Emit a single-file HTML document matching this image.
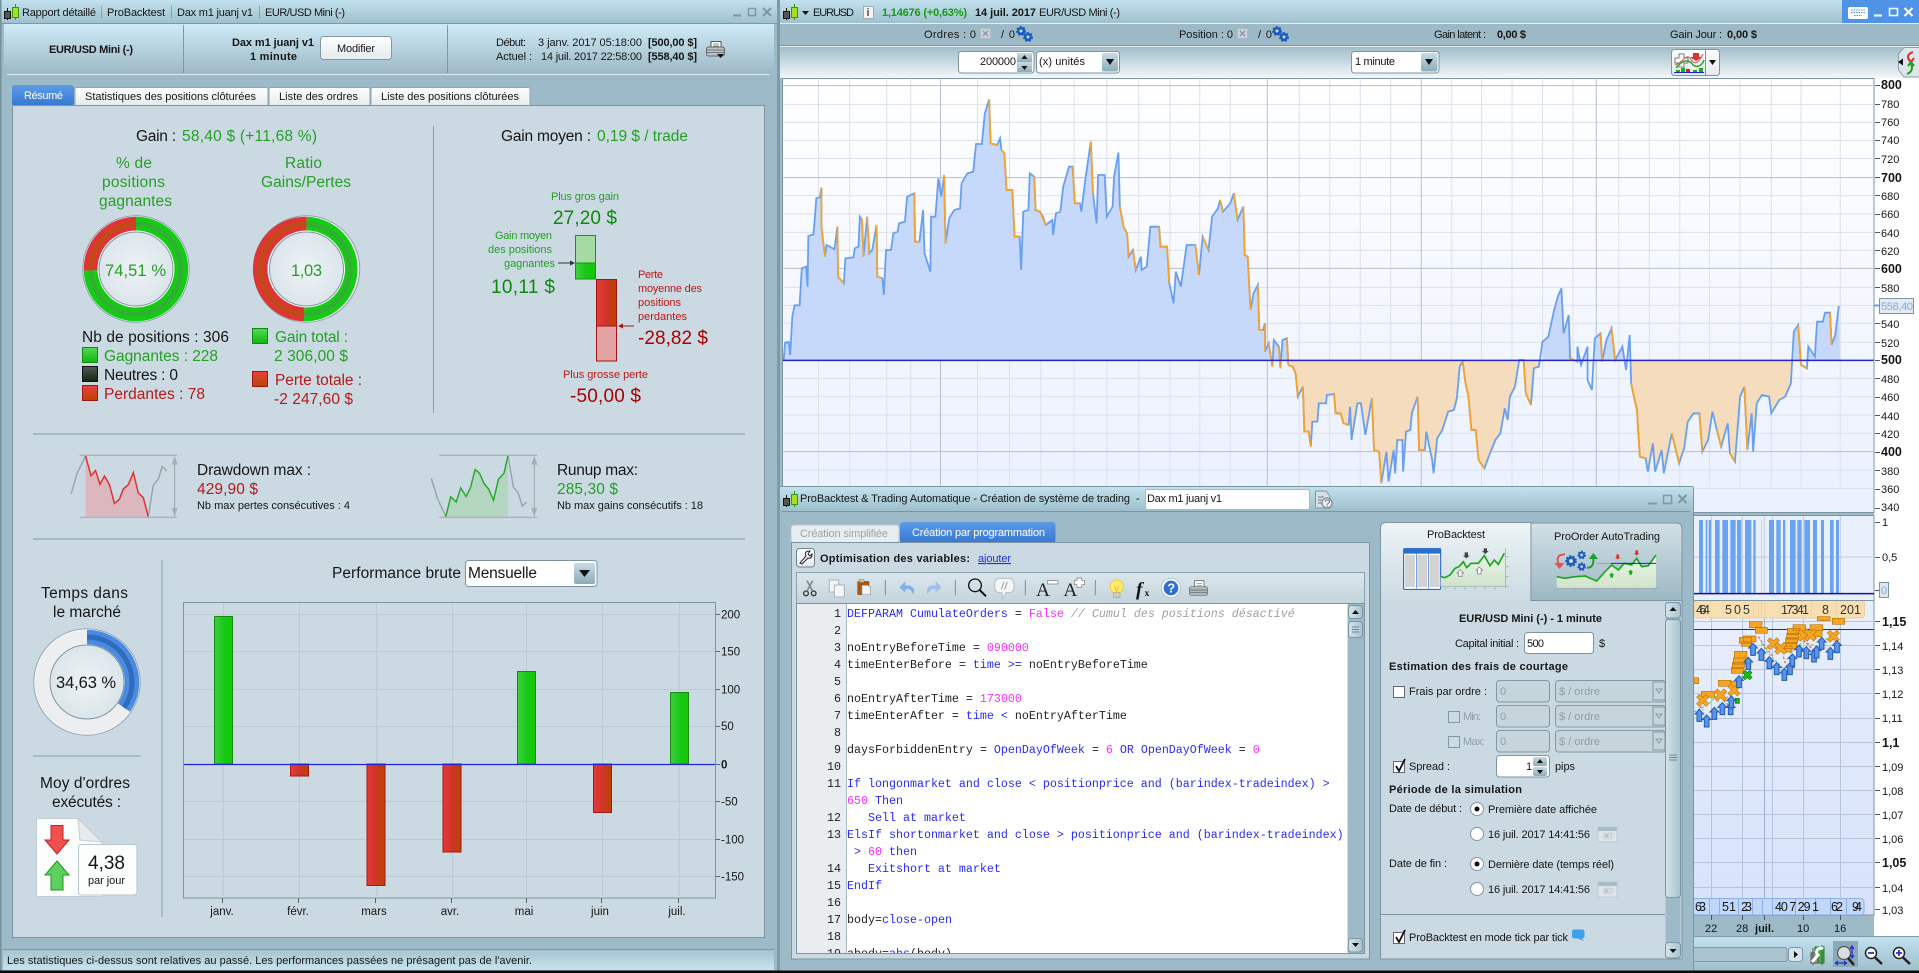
<!DOCTYPE html>
<html><head><meta charset="utf-8"><title>ProBacktest</title>
<style>
html,body{margin:0;padding:0;background:#000;overflow:hidden}
svg{display:block}
text{font-family:"Liberation Sans",sans-serif;fill:#161616;font-size:11px;white-space:pre}
.t11{font-size:11px}.t15{font-size:15.5px}.t16{font-size:16.5px}.t19{font-size:19px}.t13{font-size:12.5px}
.ax text{font-size:11.5px}
.b{font-weight:bold}
.g{fill:#259f25}.gd{fill:#0b8a0b}.r{fill:#b51a1a}.rd{fill:#a80000}.gr{fill:#9a9a9a}
.m{font-family:"Liberation Mono",monospace;font-size:11.67px;fill:#222}
.mb{fill:#2a2aff}.mm{fill:#ff2cff}.mc{fill:#a0a0a0;font-style:italic}
.n{vector-effect:non-scaling-stroke}
.fr{fill:#fff;stroke:#7d95a3;stroke-width:1}
.dis{fill:#c6d5dc;stroke:#8199a6;stroke-width:1}
</style></head><body>
<svg xmlns="http://www.w3.org/2000/svg" width="1919" height="973" viewBox="0 0 1919 973">
<defs>
<linearGradient id="tb" x1="0" y1="0" x2="0" y2="1"><stop offset="0" stop-color="#c0e1ed"/><stop offset="1" stop-color="#a0bfcc"/></linearGradient>
<linearGradient id="hd" x1="0" y1="0" x2="0" y2="1"><stop offset="0" stop-color="#cfebf7"/><stop offset="1" stop-color="#9cb9c6"/></linearGradient>
<linearGradient id="b3" x1="0" y1="0" x2="0" y2="1"><stop offset="0" stop-color="#a2bdca"/><stop offset="1" stop-color="#f3f7f9"/></linearGradient>
<linearGradient id="st" x1="0" y1="0" x2="0" y2="1"><stop offset="0" stop-color="#a5c3d0"/><stop offset="1" stop-color="#c8e4ef"/></linearGradient>
<linearGradient id="bl" x1="0" y1="0" x2="0" y2="1"><stop offset="0" stop-color="#5d9be6"/><stop offset="1" stop-color="#3677d2"/></linearGradient>
<linearGradient id="btn" x1="0" y1="0" x2="0" y2="1"><stop offset="0" stop-color="#c6dce6"/><stop offset="1" stop-color="#8eabb9"/></linearGradient>
<linearGradient id="wb" x1="0" y1="0" x2="0" y2="1"><stop offset="0" stop-color="#ffffff"/><stop offset="1" stop-color="#e4eaed"/></linearGradient>
<linearGradient id="gb" x1="0" y1="0" x2="1" y2="0"><stop offset="0" stop-color="#3fd03f"/><stop offset=".5" stop-color="#18c818"/><stop offset="1" stop-color="#12c800"/></linearGradient>
<linearGradient id="rb" x1="0" y1="0" x2="1" y2="0"><stop offset="0" stop-color="#e63a3a"/><stop offset=".5" stop-color="#cf3428"/><stop offset="1" stop-color="#b84400"/></linearGradient>
<linearGradient id="gv" x1="0" y1="0" x2="0" y2="1"><stop offset="0" stop-color="#52d852"/><stop offset="1" stop-color="#10b810"/></linearGradient>
<linearGradient id="rv" x1="0" y1="0" x2="0" y2="1"><stop offset="0" stop-color="#e84040"/><stop offset="1" stop-color="#b84400"/></linearGradient>
<linearGradient id="kv" x1="0" y1="0" x2="0" y2="1"><stop offset="0" stop-color="#555"/><stop offset="1" stop-color="#0c2a0c"/></linearGradient>
<radialGradient id="disc" cx=".5" cy=".5" r=".6"><stop offset="0" stop-color="#eef3f6"/><stop offset="1" stop-color="#d7e2e8"/></radialGradient>
<linearGradient id="ch1" x1="0" y1="0" x2="0" y2="1"><stop offset="0" stop-color="#ffffff"/><stop offset="1" stop-color="#eaf0fe"/></linearGradient>
<linearGradient id="ch3" x1="0" y1="0" x2="0" y2="1"><stop offset="0" stop-color="#e8effd"/><stop offset="1" stop-color="#d7e2fa"/></linearGradient>
<linearGradient id="pt" x1="0" y1="0" x2="0" y2="1"><stop offset="0" stop-color="#eef4f6"/><stop offset="1" stop-color="#cbdae2"/></linearGradient>
<linearGradient id="pt2" x1="0" y1="0" x2="0" y2="1"><stop offset="0" stop-color="#d2e0e6"/><stop offset="1" stop-color="#9db8c4"/></linearGradient>
<linearGradient id="tbar" x1="0" y1="0" x2="0" y2="1"><stop offset="0" stop-color="#dbe6ec"/><stop offset="1" stop-color="#c4d4dc"/></linearGradient>
<linearGradient id="scr" x1="0" y1="0" x2="1" y2="0"><stop offset="0" stop-color="#d4e3ea"/><stop offset="1" stop-color="#a9c3cf"/></linearGradient>
<linearGradient id="grn" x1="0" y1="0" x2="0" y2="1"><stop offset="0" stop-color="#eef4ea"/><stop offset="1" stop-color="#cfe3cb"/></linearGradient>
<clipPath id="up"><rect x="0" y="0" width="1600" height="1081"/></clipPath>
<clipPath id="dn"><rect x="0" y="1081" width="1600" height="400"/></clipPath>
<clipPath id="ed"><rect x="797" y="604" width="550" height="349"/></clipPath>
<clipPath id="c3"><rect x="1693" y="601" width="181" height="314"/></clipPath>
<g id="logo"><path d="M7.5 8V20" stroke="#111"/><rect x="4.5" y="11.5" width="6" height="7" fill="#555" stroke="#111"/><path d="M15.5 4V20" stroke="#2a9a10"/><rect x="12.5" y="7.5" width="6" height="10" fill="#a6e020" stroke="#2a9a10"/></g>
<g id="prn"><rect x="5" y="0.5" width="10" height="7" fill="#fff" stroke="#555"/><path d="M7 3H13M7 5H13" stroke="#888"/><rect x="0.5" y="6" width="18" height="9" rx="2" fill="#b8c2c8" stroke="#666"/><path d="M1 9H18M1 11.5H18" stroke="#777"/></g>
<g id="gear"><circle cx="0" cy="0" r="4" fill="#1a5cc0" stroke="#1a5cc0" stroke-width="2" stroke-dasharray="2 1.5"/><circle r="1.5" fill="#cfe0ef"/></g>
<g id="cal"><rect x="0" y="2" width="19" height="15" fill="#dde6eb" stroke="#bccad2"/><rect x="0" y="2" width="19" height="4" fill="#a8bdc8"/><path d="M4 9H16M4 12H16M7 7V15M10 7V15M13 7V15" stroke="#c2ced6"/><rect x="7" y="9.500" width="3" height="3" fill="#e8b0b0"/></g>
<g id="ua"><path d="M0 0L13 14H7V36H-7V14H-13Z" fill="#5a94e8" stroke="#1d58b8" stroke-width="3"/></g>
<g id="xc"><path d="M-18 -10L-10 -18L0 -8L10 -18L18 -10L8 0L18 10L10 18L0 8L-10 18L-18 10L-8 0Z" fill="#f5a522" stroke="#c87a08" stroke-width="2"/></g>
</defs>

<rect width="1919" height="973" fill="#9dbac8"/>

<!-- LEFT WINDOW -->
<rect x="0" y="0" width="777" height="24" fill="url(#tb)"/>
<rect x="0" y="0" width="1.500" height="971" fill="#75909d"/>
<rect x="777" y="0" width="3" height="971" fill="#7f9aa7"/>
<path d="M0 23.500H777" stroke="#7f9aa7"/>
<use href="#logo"/>
<text x="22" y="16" textLength="74">Rapport détaillé</text><path d="M101.500 6V18M171.500 6V18M259.500 6V18" stroke="#8aa3af"/>
<text x="107" y="16" textLength="58">ProBacktest</text>
<text x="177" y="16" textLength="76">Dax m1 juanj v1</text>
<text x="265" y="16" textLength="80">EUR/USD Mini (-)</text>
<path d="M733 15.500H741" stroke="#7f98a4" stroke-width="2"/><rect x="748.500" y="8.500" width="7" height="7" fill="none" stroke="#7f98a4" stroke-width="1.500"/><path d="M763 8L771 16M771 8L763 16" stroke="#7f98a4" stroke-width="2"/>

<rect x="4" y="24" width="770" height="50" fill="url(#hd)"/>
<path d="M7 74.500H770" stroke="#e0ecf1"/><path d="M183.500 25V73M447.500 25V73" stroke="#7f98a4"/>
<text class="b" x="49" y="53" textLength="84">EUR/USD Mini (-)</text>
<text class="b" x="232" y="46" textLength="82">Dax m1 juanj v1</text>
<text class="b" x="250" y="60" textLength="47">1 minute</text>
<rect x="320.500" y="36.500" width="71" height="23" rx="3" fill="url(#wb)" stroke="#8199a6"/>
<text x="337" y="52" textLength="38">Modifier</text>
<text x="496" y="46" textLength="30">Début:</text><text x="538" y="46" textLength="104">3 janv. 2017 05:18:00</text><text class="b" x="648" y="46" textLength="49">[500,00 $]</text>
<text x="496" y="60" textLength="36">Actuel :</text><text x="541" y="60" textLength="101">14 juil. 2017 22:58:00</text><text class="b" x="648" y="60" textLength="49">[558,40 $]</text>
<use href="#prn" x="706" y="41"/><path d="M717 54H724L720.500 58Z" fill="#111"/>

<!-- tabs -->
<rect x="12" y="85" width="62" height="21" rx="3" fill="url(#bl)"/>
<text x="24" y="99" textLength="39" style="fill:#fff">Résumé</text>
<rect x="75" y="87.500" width="193" height="19" rx="2" fill="url(#wb)" stroke="#8fa7b3"/>
<rect x="269" y="87.500" width="101" height="19" rx="2" fill="url(#wb)" stroke="#8fa7b3"/>
<rect x="371" y="87.500" width="159" height="19" rx="2" fill="url(#wb)" stroke="#8fa7b3"/>
<text x="85" y="100" textLength="171">Statistiques des positions clôturées</text>
<text x="279" y="100" textLength="79">Liste des ordres</text>
<text x="381" y="100" textLength="138">Liste des positions clôturées</text>
<rect x="12.500" y="105.500" width="752" height="832" fill="#cbdae2" stroke="#7d95a3"/>

<text class="t15" x="136" y="141" textLength="40">Gain :</text><text class="t15 g" x="182" y="141" textLength="135">58,40 $ (+11,68 %)</text>
<path d="M433.500 126V413" stroke="#8aa2ae"/>
<text class="t15" x="501" y="141" textLength="90">Gain moyen :</text><text class="t15 g" x="597" y="141" textLength="91">0,19 $ / trade</text>
<text class="t15 g" x="116" y="168" textLength="36">% de</text>
<text class="t15 g" x="102" y="187" textLength="63">positions</text>
<text class="t15 g" x="99" y="206" textLength="73">gagnantes</text>
<text class="t15 g" x="285" y="168" textLength="37">Ratio</text>
<text class="t15 g" x="261" y="187" textLength="90">Gains/Pertes</text>

<!-- donut 1 -->
<circle cx="136" cy="269" r="53.200" fill="#fff" stroke="#8b9ea8"/>
<path d="M136 224A45 45 0 1 1 91 270.400" fill="none" stroke="#14cc14" stroke-width="14.500"/>
<path d="M136 224A45 45 0 1 1 91 270.400" fill="none" stroke="#30b030" stroke-width="5"/>
<path d="M91 270.400A45 45 0 0 1 136 224" fill="none" stroke="#e03434" stroke-width="14.500"/>
<path d="M91 270.400A45 45 0 0 1 136 224" fill="none" stroke="#c04a18" stroke-width="5"/>
<circle cx="136" cy="269" r="37" fill="url(#disc)" stroke="#7d929d"/><circle cx="136" cy="269" r="38" fill="none" stroke="#fff" stroke-width="1"/>
<text class="t16 g" x="105" y="276" textLength="61">74,51 %</text>
<!-- donut 2 -->
<circle cx="306.500" cy="269" r="53.200" fill="#fff" stroke="#8b9ea8"/>
<path d="M306.500 224A45 45 0 1 1 304.100 314" fill="none" stroke="#14cc14" stroke-width="14.500"/>
<path d="M306.500 224A45 45 0 1 1 304.100 314" fill="none" stroke="#30b030" stroke-width="5"/>
<path d="M304.100 314A45 45 0 0 1 306.500 224" fill="none" stroke="#e03434" stroke-width="14.500"/>
<path d="M304.100 314A45 45 0 0 1 306.500 224" fill="none" stroke="#c04a18" stroke-width="5"/>
<circle cx="306.500" cy="269" r="37" fill="url(#disc)" stroke="#7d929d"/><circle cx="306.500" cy="269" r="38" fill="none" stroke="#fff"/>
<text class="t16 g" x="291" y="276" textLength="31">1,03</text>

<text class="t15" x="82" y="342" textLength="147">Nb de positions : 306</text>
<rect x="82.500" y="347.500" width="15" height="15" fill="url(#gv)" stroke="#118a11"/><text class="t15 g" x="104" y="361" textLength="114">Gagnantes : 228</text>
<rect x="82.500" y="366.500" width="15" height="15" fill="url(#kv)" stroke="#111"/><text class="t15" x="104" y="380" textLength="74">Neutres : 0</text>
<rect x="82.500" y="385.500" width="15" height="15" fill="url(#rv)" stroke="#a51414"/><text class="t15 r" x="104" y="399" textLength="101">Perdantes : 78</text>
<rect x="252.500" y="328.500" width="15" height="15" fill="url(#gv)" stroke="#118a11"/><text class="t15 g" x="275" y="342" textLength="73">Gain total :</text><text class="t15 g" x="274" y="361" textLength="74">2 306,00 $</text>
<rect x="252.500" y="371.500" width="15" height="15" fill="url(#rv)" stroke="#a51414"/><text class="t15 r" x="275" y="385" textLength="87">Perte totale :</text><text class="t15 r" x="274" y="404" textLength="79">-2 247,60 $</text>

<!-- gain box -->
<text class="g" x="551" y="200" textLength="68">Plus gros gain</text>
<text class="t19 gd" x="553" y="224" textLength="64">27,20 $</text>
<text class="g" x="495" y="239" textLength="57">Gain moyen</text>
<text class="g" x="488" y="253" textLength="64">des positions</text>
<text class="g" x="504" y="267" textLength="51">gagnantes</text>
<path d="M558 263H572" stroke="#333"/><path d="M575 263L570 260.500V265.500Z" fill="#333"/>
<text class="t19 gd" x="491" y="293" textLength="64">10,11 $</text>
<rect x="575.500" y="235.500" width="20" height="27.500" fill="#a4dba4" stroke="#1c8f1c"/>
<rect x="575.500" y="263" width="20" height="16" fill="url(#gb)" stroke="#1c8f1c"/>
<rect x="596.500" y="279.500" width="20" height="46.500" fill="url(#rb)" stroke="#a51414"/>
<rect x="596.500" y="326" width="20" height="35" fill="#e4a3a3" stroke="#a51414"/>
<path d="M634 326H622" stroke="#a51414"/><path d="M618 326L623 323.500V328.500Z" fill="#a51414"/>
<text class="r" x="638" y="278" textLength="25">Perte</text>
<text class="r" x="638" y="292" textLength="64">moyenne des</text>
<text class="r" x="638" y="306" textLength="43">positions</text>
<text class="r" x="638" y="320" textLength="49">perdantes</text>
<text class="t19 rd" x="638" y="344" textLength="70">-28,82 $</text>
<text class="r" x="563" y="378" textLength="85">Plus grosse perte</text>
<text class="t19 rd" x="570" y="402" textLength="71">-50,00 $</text>
<path d="M33 434H745M33 539H745" stroke="#7f98a4"/>

<!-- drawdown / runup -->
<g transform="translate(0,430) scale(.4975,.3463)">
<polygon points="172,75 183,132 192,117 201,157 210,133 220,158 230,212 240,200 248,170 258,158 268,123 278,182 288,195 298,250 172,250" fill="#dcb8be"/>
<polyline class="n" points="143,185 155,125 172,75" fill="none" stroke="#9aa6ad" stroke-width="1.500"/>
<polyline class="n" points="298,250 308,160 318,142 326,105 335,118" fill="none" stroke="#9aa6ad" stroke-width="1.500"/>
<polyline class="n" points="172,75 183,132 192,117 201,157 210,133 220,158 230,212 240,200 248,170 258,158 268,123 278,182 288,195 298,250" fill="none" stroke="#e03030" stroke-width="1.500"/>
<path class="n" d="M160 73H356M160 252H356M351 78V248" stroke="#9aa6ad" fill="none"/>
<path d="M351 75L345 100H357ZM351 250L345 225H357Z" fill="#a3afb6"/>
<polygon points="896,250 906,193 917,208 926,167 937,192 946,165 955,114 964,125 973,155 982,170 992,203 1002,142 1013,125 1021,75 1021,250" fill="#b4d6c0"/>
<polyline class="n" points="867,140 880,200 896,250" fill="none" stroke="#9aa6ad" stroke-width="1.500"/>
<polyline class="n" points="1021,75 1032,165 1041,180 1050,220 1058,208" fill="none" stroke="#9aa6ad" stroke-width="1.500"/>
<polyline class="n" points="896,250 906,193 917,208 926,167 937,192 946,165 955,114 964,125 973,155 982,170 992,203 1002,142 1013,125 1021,75" fill="none" stroke="#2aaa30" stroke-width="1.500"/>
<path class="n" d="M883 73H1080M883 252H1080M1074 78V248" stroke="#9aa6ad" fill="none"/>
<path d="M1074 75L1068 100H1080ZM1074 250L1068 225H1080Z" fill="#a3afb6"/>
</g>
<text class="t15" x="197" y="475" textLength="114">Drawdown max :</text>
<text class="t15 r" x="197" y="494" textLength="61">429,90 $</text>
<text class="t11" x="197" y="509" textLength="153">Nb max pertes consécutives : 4</text>
<text class="t15" x="557" y="475" textLength="81">Runup max:</text>
<text class="t15 g" x="557" y="494" textLength="61">285,30 $</text>
<text class="t11" x="557" y="509" textLength="146">Nb max gains consécutifs : 18</text>

<path d="M162 560V917M33 756H141" stroke="#8aa2ae"/>
<text class="t15" x="41" y="598" textLength="87">Temps dans</text>
<text class="t15" x="53" y="617" textLength="68">le marché</text>
<!-- donut 3 -->
<circle cx="87" cy="682" r="53.200" fill="#fff" stroke="#93a5ae"/>
<circle cx="87" cy="682" r="45" fill="none" stroke="#eceef0" stroke-width="14"/>
<path d="M87 637A45 45 0 0 1 124 707.600" fill="none" stroke="#4a8ae0" stroke-width="14.500"/>
<path d="M87 637A45 45 0 0 1 124 707.600" fill="none" stroke="#2f6cbe" stroke-width="5"/>
<circle cx="87" cy="682" r="37" fill="url(#disc)" stroke="#7d929d"/>
<text class="t16" x="56" y="688" textLength="60">34,63 %</text>
<text class="t15" x="40" y="788" textLength="90">Moy d'ordres</text>
<text class="t15" x="52" y="807" textLength="69">exécutés :</text>
<!-- order doc -->
<path d="M36.500 818.500H78L102 842V896.500H36.500Z" fill="#fbfcfc" stroke="#c2ced6"/>
<path d="M78 818.500L80 840L102 842Z" fill="#e6ebee" stroke="#c2ced6"/>
<path d="M51 825.500H63V840H69L57 854L45 840H51Z" fill="#ef5050" stroke="#c02020"/>
<path d="M57 861L69 875H63V890H51V875H45Z" fill="#5ed05e" stroke="#1e981e"/>
<rect x="78.500" y="844.500" width="58.500" height="50.500" rx="3" fill="#fbfcfc" stroke="#b9c6ce"/>
<text class="t19" x="88" y="869" textLength="37" style="-webkit-text-stroke:.3px #111">4,38</text>
<text class="t11" x="88" y="884" textLength="37">par jour</text>

<text class="t15" x="332" y="578" textLength="129">Performance brute</text>
<rect x="465.500" y="560.500" width="131.500" height="26" rx="3" class="fr"/>
<text class="t15" x="468" y="578" textLength="69">Mensuelle</text>
<rect x="574" y="563" width="21" height="21" rx="2" fill="url(#btn)"/><path d="M579 570H590L584.500 577Z" fill="#111"/>

<!-- bar chart -->
<rect x="183.500" y="602.500" width="532" height="295.500" fill="#cbdae2" stroke="#7d95a3"/>
<path d="M184 614.500H715M184 651.500H715M184 689.500H715M184 726.500H715M184 801.500H715M184 839.500H715M184 876.500H715M223.500 603V898M299.500 603V898M376.500 603V898M452.500 603V898M526.500 603V898M602.500 603V898M679.500 603V898" stroke="#bccad2"/>
<path d="M716 614.500H720M716 651.500H720M716 689.500H720M716 726.500H720M716 764.500H720M716 801.500H720M716 839.500H720M716 876.500H720M222.500 898V903M298.500 898V903M375.500 898V903M451.500 898V903M526.500 898V903M601.500 898V903M678.500 898V903" stroke="#566"/>
<g stroke="#138a13"><rect x="214.500" y="616.500" width="18" height="147.500" fill="url(#gb)"/><rect x="517.500" y="671.500" width="18" height="92.500" fill="url(#gb)"/><rect x="670.500" y="692.500" width="18" height="71.500" fill="url(#gb)"/></g>
<g stroke="#a81616"><rect x="290.500" y="764" width="18" height="12" fill="url(#rb)"/><rect x="367" y="764" width="18" height="121.500" fill="url(#rb)"/><rect x="443" y="764" width="18" height="88" fill="url(#rb)"/><rect x="593.500" y="764" width="18" height="48.500" fill="url(#rb)"/></g>
<path d="M184 764.500H715" stroke="#2323d8" stroke-width="1.200"/>
<g class="ax"><text x="721" y="618.500">200</text><text x="721" y="655.500">150</text><text x="721" y="693.500">100</text><text x="721" y="730">50</text><text class="b" x="721" y="768.500">0</text><text x="721" y="805.500">-50</text><text x="721" y="843.500">-100</text><text x="721" y="880.500">-150</text></g>
<g class="ax" text-anchor="middle"><text x="222" y="915">janv.</text><text x="298" y="915">févr.</text><text x="374" y="915">mars</text><text x="450" y="915">avr.</text><text x="524" y="915">mai</text><text x="600" y="915">juin</text><text x="677" y="915">juil.</text></g>

<!-- status -->
<path d="M3 949.500H774" stroke="#7f98a4"/>
<rect x="3" y="950" width="771" height="20" fill="url(#st)"/>
<text x="7" y="964" textLength="525">Les statistiques ci-dessus sont relatives au passé. Les performances passées ne présagent pas de l'avenir.</text>

<!-- RIGHT WINDOW -->
<rect x="780" y="0" width="1139" height="24" fill="url(#tb)"/>
<path d="M780 23.500H1919" stroke="#e4eef2"/>
<rect x="1842" y="0" width="77" height="23" fill="#4f93e6"/>
<rect x="1848" y="7" width="20" height="12" rx="2" fill="#fff"/><path d="M1851 10H1865M1851 12.500H1865M1854 15.500H1862" stroke="#4f93e6" stroke-dasharray="1.500 1"/>
<path d="M1874 15.500H1882" stroke="#fff" stroke-width="2"/><rect x="1889.500" y="8.500" width="8" height="7" fill="none" stroke="#fff" stroke-width="1.500"/><path d="M1904.500 8L1912.500 16M1912.500 8L1904.500 16" stroke="#fff" stroke-width="2"/>
<use href="#logo" x="779"/>
<path d="M802 11H809L805.500 15Z" fill="#111"/>
<text x="813" y="16" textLength="41">EURUSD</text>
<rect x="863.500" y="6.500" width="10" height="12" fill="#f2f4f5" stroke="#a0adb4"/><text class="b t11" x="866.500" y="16" style="fill:#555">i</text>
<text class="b" x="882" y="16" textLength="85" style="fill:#159a15">1,14676 (+0,63%)</text>
<text class="b" x="975" y="16" textLength="61">14 juil. 2017</text>
<text x="1039" y="16" textLength="81">EUR/USD Mini (-)</text>

<rect x="780" y="24" width="1139" height="21" fill="#9db9c6"/>
<path d="M780 45.500H1919" stroke="#7f98a4"/><path d="M780 46.500H1919" stroke="#e4eef2"/>
<text x="924" y="38" textLength="52">Ordres : 0</text><rect x="980.500" y="28.500" width="10" height="10" fill="#c4d2d9" stroke="#aebcc4"/><path d="M983 31L988 36M988 31L983 36" stroke="#889"/><text x="1001" y="38" textLength="14">/ 0</text>
<use href="#gear" x="1021" y="31"/><use href="#gear" x="1028" y="37"/>
<text x="1179" y="38" textLength="54">Position : 0</text><rect x="1237.500" y="28.500" width="10" height="10" fill="#c4d2d9" stroke="#aebcc4"/><path d="M1240 31L1245 36M1245 31L1240 36" stroke="#889"/><text x="1258" y="38" textLength="14">/ 0</text>
<use href="#gear" x="1277" y="31"/><use href="#gear" x="1284" y="37"/>
<text x="1434" y="38" textLength="52">Gain latent :</text><text class="b" x="1497" y="38" textLength="29">0,00 $</text>
<text x="1670" y="38" textLength="52">Gain Jour :</text><text class="b" x="1727" y="38" textLength="30">0,00 $</text>

<rect x="780" y="47" width="1139" height="31" fill="url(#b3)"/>
<rect x="958.500" y="51.500" width="75.500" height="21.500" rx="3" class="fr"/>
<text x="980" y="65" textLength="36">200000</text>
<rect x="1017" y="53" width="15" height="9" fill="url(#btn)"/><rect x="1017" y="62" width="15" height="10" fill="url(#btn)"/><path d="M1024.500 55L1027.500 59H1021.500ZM1024.500 70L1027.500 66H1021.500Z" fill="#111"/>
<rect x="1036.500" y="51.500" width="83" height="21.500" rx="3" class="fr"/>
<text x="1039" y="65" textLength="46">(x) unités</text>
<rect x="1102" y="53" width="16" height="18.500" rx="2" fill="url(#btn)"/><path d="M1106 59H1114L1110 65Z" fill="#111"/>
<rect x="1351.500" y="51.500" width="87.500" height="21.500" rx="3" class="fr"/>
<text x="1355" y="65" textLength="40">1 minute</text>
<rect x="1421" y="53" width="16.500" height="18.500" rx="2" fill="url(#btn)"/><path d="M1425 59H1433L1429 65Z" fill="#111"/>
<rect x="1671.500" y="49.500" width="48" height="26" rx="3" fill="url(#wb)" stroke="#7d95a3"/><path d="M1705.500 50V75" stroke="#7d95a3"/>
<path d="M1675 58H1679V54H1684V58H1688V63H1684V67H1679V63H1675Z" fill="#fff" stroke="#777"/>
<path d="M1675 65C1684 62 1685 54 1690 58C1693 64 1697 66 1703 54" fill="none" stroke="#d86a6a" stroke-width="1.200"/>
<path d="M1676 68C1684 58 1690 60 1693 65C1697 68 1702 66 1704 60" fill="none" stroke="#2aa52a" stroke-width="1.500"/>
<path d="M1693 53H1699V57H1702L1696 61L1690 57H1693Z" fill="#e03030"/>
<path d="M1676 70H1680V72H1676ZM1681 68H1685V72H1681ZM1693 70H1697V72H1693ZM1699 68H1703V72H1699Z" fill="#18b018"/><path d="M1686 69H1690V72H1686Z" fill="#d82020"/><path d="M1674 72.500H1704" stroke="#1e1ed0"/>
<path d="M1709 60H1716L1712.500 65Z" fill="#111"/>
<path d="M1919 47.500H1904L1898.500 54V70L1904 77H1919" fill="#dce7ec" stroke="#8aa2ae"/>
<path d="M1898 62L1903 58.500V65.500Z" fill="#111"/>
<path d="M1913 52C1907 54 1907 58 1910 61M1908 58L1911 62L1914 58" fill="none" stroke="#e03030" stroke-width="2"/>
<path d="M1911 64C1913 68 1912 72 1907 74M1908 66L1911 62L1914 66" fill="none" stroke="#1ea01e" stroke-width="2"/>

<!-- main chart -->
<rect x="1874" y="78" width="45" height="859" fill="#fff"/>
<rect x="782.500" y="78.500" width="1091.500" height="434" fill="url(#ch1)" stroke="#7d95a3"/>
<g transform="translate(780,0) scale(.72622,.33333)">
<path class="n" fill="none" stroke="#dce1ea" d="M53 236V1460M96 236V1460M147 236V1460M180 236V1460M272 236V1460M316 236V1460M359 236V1460M405 236V1460M450 236V1460M494 236V1460M537 236V1460M578 236V1460M620 236V1460M715 236V1460M757 236V1460M799 236V1460M841 236V1460M925 236V1460M966 236V1460M1008 236V1460M1050 236V1460M1092 236V1460M1155 236V1460M1197 236V1460M1239 236V1460M1280 236V1460M1322 236V1460M1365 236V1460M1406 236V1460M1460 236V1460M4 313H1506M4 367H1506M4 421H1506M4 475H1506M4 587H1506M4 642H1506M4 697H1506M4 751H1506M4 862H1506M4 916H1506M4 970H1506M4 1027H1506M4 1135H1506M4 1190H1506M4 1245H1506M4 1300H1506M4 1410H1506M4 1465H1506"/>
<path class="n" fill="none" stroke="#b8c0ce" d="M221 236V1460M671 236V1460M883 236V1460M1124 236V1460M4 257H1506M4 533H1506M4 805H1506M4 1355H1506"/>
<polygon clip-path="url(#up)" fill="#c6d9fb" points="5,1081 7,1028 12,1026 14,1065 17,950 20,916 27,916 30,805 36,800 38,860 39,708 46,703 47,680 50,595 55,592 57,563 57,680 62,770 64,735 75,748 79,680 80,830 88,850 90,775 101,772 103,745 108,740 110,650 113,660 115,770 120,650 123,760 127,750 133,675 134,830 141,835 143,885 146,750 153,750 156,700 162,695 164,670 172,665 175,590 185,580 186,725 192,725 197,630 199,760 207,815 208,650 214,650 218,535 222,590 226,525 228,730 233,655 240,630 248,625 250,550 258,520 266,515 270,432 278,432 282,340 288,298 290,430 299,435 303,415 305,450 309,460 312,570 320,570 323,710 330,710 332,810 335,635 342,630 344,520 350,530 352,630 358,635 362,650 366,675 375,660 376,705 380,640 386,635 390,560 398,500 403,500 406,610 413,610 415,635 420,545 428,425 431,580 436,670 438,525 447,525 450,650 458,620 460,530 466,458 468,620 473,680 478,700 480,770 486,750 490,810 497,770 498,810 505,800 510,680 522,680 524,740 533,740 536,850 542,910 545,815 552,860 560,735 572,735 577,825 582,710 590,750 595,650 603,625 606,600 610,635 620,610 625,580 630,660 638,620 640,765 644,770 648,930 652,880 658,855 660,990 665,990 668,970 668,1055 673,1030 678,1100 680,1020 687,1040 689,1105 692,1020 698,1015 700,1081 1050,1081 1050,1025 1058,1010 1062,970 1066,930 1071,890 1076,865 1079,1000 1086,945 1088,1075 1098,1081 1098,1040 1103,1081 1112,1040 1112,1081 1122,1081 1122,1015 1130,1000 1132,1081 1138,1020 1145,985 1150,1080 1160,1040 1165,1081 1170,1005 1172,1081 1396,1081 1396,995 1402,975 1406,1081 1416,1081 1416,1040 1425,1070 1428,965 1436,965 1439,938 1446,938 1448,1035 1453,1005 1458,918 1460,1081"/>
<polygon clip-path="url(#dn)" fill="#f5dcbc" points="700,1081 706,1100 710,1120 713,1190 720,1160 722,1295 728,1295 731,1340 733,1265 740,1265 742,1210 752,1210 753,1185 763,1182 765,1240 772,1240 776,1270 783,1275 785,1220 787,1320 795,1210 800,1210 806,1305 815,1195 818,1350 825,1355 828,1450 835,1355 838,1445 845,1350 847,1420 850,1320 857,1320 858,1415 862,1295 868,1290 870,1240 878,1190 880,1350 888,1350 890,1295 898,1380 900,1420 905,1315 912,1290 920,1235 928,1230 932,1195 936,1100 940,1085 944,1150 948,1190 952,1290 958,1290 962,1380 970,1405 975,1375 985,1320 992,1300 998,1225 1002,1260 1005,1190 1012,1160 1018,1081 1024,1081 1027,1180 1034,1215 1038,1105 1045,1100 1047,1081 1172,1081 1172,1150 1180,1230 1184,1370 1192,1375 1195,1415 1202,1330 1205,1415 1214,1350 1217,1420 1228,1300 1238,1390 1245,1345 1250,1265 1258,1240 1266,1240 1270,1355 1278,1320 1284,1235 1290,1290 1296,1340 1305,1270 1308,1360 1315,1385 1322,1190 1328,1160 1332,1350 1338,1240 1340,1355 1345,1210 1352,1185 1362,1190 1365,1240 1376,1200 1384,1190 1392,1150 1394,1081"/>
<polyline class="n" fill="none" stroke="#6a9ff0" stroke-width="1.800" points="5,1081 7,1028 12,1026 14,1065 17,950 20,916 27,916 30,805 36,800 38,860 39,708 46,703 47,680 50,595 55,592 57,563 57,680 62,770 64,735 75,748 79,680 80,830 88,850 90,775 101,772 103,745 108,740 110,650 113,660 115,770 120,650 123,760 127,750 133,675 134,830 141,835 143,885 146,750 153,750 156,700 162,695 164,670 172,665 175,590 185,580 186,725 192,725 197,630 199,760 207,815 208,650 214,650 218,535 222,590 226,525 228,730 233,655 240,630 248,625 250,550 258,520 266,515 270,432 278,432 282,340 288,298 290,430 299,435 303,415 305,450 309,460 312,570 320,570 323,710 330,710 332,810 335,635 342,630 344,520 350,530 352,630 358,635 362,650 366,675 375,660 376,705 380,640 386,635 390,560 398,500 403,500 406,610 413,610 415,635 420,545 428,425 431,580 436,670 438,525 447,525 450,650 458,620 460,530 466,458 468,620 473,680 478,700 480,770 486,750 490,810 497,770 498,810 505,800 510,680 522,680 524,740 533,740 536,850 542,910 545,815 552,860 560,735 572,735 577,825 582,710 590,750 595,650 603,625 606,600 610,635 620,610 625,580 630,660 638,620 640,765 644,770 648,930 652,880 658,855 660,990 665,990 668,970 668,1055 673,1030 678,1100 680,1020 687,1040 689,1105 692,1020 698,1015 700,1095 706,1100 710,1120 713,1190 720,1160 722,1295 728,1295 731,1340 733,1265 740,1265 742,1210 752,1210 753,1185 763,1182 765,1240 772,1240 776,1270 783,1275 785,1220 787,1320 795,1210 800,1210 806,1305 815,1195 818,1350 825,1355 828,1450 835,1355 838,1445 845,1350 847,1420 850,1320 857,1320 858,1415 862,1295 868,1290 870,1240 878,1190 880,1350 888,1350 890,1295 898,1380 900,1420 905,1315 912,1290 920,1235 928,1230 932,1195 936,1100 940,1085 944,1150 948,1190 952,1290 958,1290 962,1380 970,1405 975,1375 985,1320 992,1300 998,1225 1002,1260 1005,1190 1012,1160 1018,1080 1024,1080 1027,1180 1034,1215 1038,1105 1045,1100 1050,1025 1058,1010 1062,970 1066,930 1071,890 1076,865 1079,1000 1086,945 1088,1075 1098,1085 1098,1040 1103,1095 1112,1040 1112,1140 1118,1170 1122,1015 1130,1000 1132,1085 1138,1020 1145,985 1150,1080 1160,1040 1165,1110 1170,1005 1172,1150 1180,1230 1184,1370 1192,1375 1195,1415 1202,1330 1205,1415 1214,1350 1217,1420 1228,1300 1238,1390 1245,1345 1250,1265 1258,1240 1266,1240 1270,1355 1278,1320 1284,1235 1290,1290 1296,1340 1305,1270 1308,1360 1315,1385 1322,1190 1328,1160 1332,1350 1338,1240 1340,1355 1345,1210 1352,1185 1362,1190 1365,1240 1376,1200 1384,1190 1392,1150 1396,995 1402,975 1406,1095 1414,1105 1416,1040 1425,1070 1428,965 1436,965 1439,938 1446,938 1448,1035 1453,1005 1458,918"/>
<path class="n" fill="none" stroke="#f5a32c" stroke-width="1.800" d="M57 563V680L62 770M79 680L80 830L88 850M113 660L115 770M120 650L123 760M133 675L134 830L141 835M185 580L186 725L192 725M226 525L228 730M288 298L290 430L299 435M305 450L309 460L312 570L320 570L323 710L330 710M350 530L352 630L358 635L366 675M403 500L406 610L413 610M428 425L431 580M468 620L473 680L478 700L480 770M490 810L486 750M522 680L524 740L533 740L536 850M572 735L577 825M590 750L582 710M610 635L606 600M625 580L630 660M638 620L640 765L644 770L648 930M658 855L660 990L665 990M668 970V1055M673 1030L678 1100M687 1040L689 1105M698 1015L700 1095L706 1100L710 1120L713 1190M720 1160L722 1295L728 1295L731 1340M763 1182L765 1240L772 1240L776 1270L783 1275M815 1195L818 1350L825 1355L828 1450M878 1190L880 1350L888 1350M940 1085L944 1150L948 1190L952 1290L958 1290L962 1380L970 1405M1024 1080L1027 1180L1034 1215M1088 1075L1098 1085M1130 1000L1132 1085M1145 985L1150 1080M1172 1150L1180 1230L1184 1370L1192 1375M1228 1300L1238 1390M1266 1240L1270 1355M1290 1290L1296 1340M1308 1360L1315 1385M1328 1160L1332 1350M1402 975L1406 1095L1414 1105M1446 938L1448 1035"/>
<path class="n" d="M4 1081H1506" stroke="#2323d8" stroke-width="1.500"/>
</g>
<path d="M1875 85.500H1880M1875 104.500H1880M1875 122.500H1880M1875 140.500H1880M1875 158.500H1880M1875 177.500H1880M1875 195.500H1880M1875 214.500H1880M1875 232.500H1880M1875 250.500H1880M1875 268.500H1880M1875 287.500H1880M1875 323.500H1880M1875 342.500H1880M1875 360.500H1880M1875 378.500H1880M1875 397.500H1880M1875 415.500H1880M1875 433.500H1880M1875 452.500H1880M1875 470.500H1880M1875 489.500H1880M1875 508.500H1880" stroke="#555"/>
<g><text class="b t13" x="1881" y="89">800</text><text x="1881" y="108">780</text><text x="1881" y="126">760</text><text x="1881" y="144">740</text><text x="1881" y="163">720</text><text class="b t13" x="1881" y="182">700</text><text x="1881" y="200">680</text><text x="1881" y="218">660</text><text x="1881" y="237">640</text><text x="1881" y="255">620</text><text class="b t13" x="1881" y="273">600</text><text x="1881" y="292">580</text><text x="1881" y="328">540</text><text x="1881" y="347">520</text><text class="b t13" x="1881" y="364">500</text><text x="1881" y="383">480</text><text x="1881" y="401">460</text><text x="1881" y="420">440</text><text x="1881" y="438">420</text><text class="b t13" x="1881" y="456">400</text><text x="1881" y="475">380</text><text x="1881" y="493">360</text><text x="1881" y="511">340</text></g>
<rect x="1879.500" y="298.500" width="34" height="15" fill="#e3ebf0" stroke="#7d95a3"/><text x="1881" y="310" textLength="32" style="fill:#7fa8ee">558,40</text>
<path d="M1874 305.500H1879" stroke="#6a9ff0" stroke-width="2"/>

<!-- sub chart -->
<rect x="1693" y="515.500" width="181" height="85" fill="#eaf0fb" stroke="#7d95a3"/>
<g transform="translate(1690,510) scale(.33333)">
<path class="n" stroke="#c2cde0" fill="none" d="M64 18V250M157 18V250M223 18V250M248 18V250M340 18V250M451 18V250M12 141H552"/>
<path fill="#6ba3f3" d="M27 30H39V250H27ZM47 30H52V250H47ZM56 30H63V250H56ZM75 30H89V250H75ZM97 30H114V250H97ZM121 30H137V250H121ZM141 30H154V250H141ZM165 30H184V250H165ZM190 30H197V250H190ZM215 30H216V250H215ZM237 30H252V250H237ZM259 30H272V250H259ZM279 30H286V250H279ZM300 30H317V250H300ZM322 30H335V250H322ZM343 30H360V250H343ZM369 30H381V250H369ZM393 30H402V250H393ZM420 30H431V250H420ZM438 30H447V250H438Z"/>
<path class="n" d="M12 251H552" stroke="#12129c" stroke-width="1.500"/>
</g>
<rect x="1879.500" y="582.500" width="9" height="15" fill="#dfe6ea" stroke="#7d95a3"/><text x="1881" y="594" style="fill:#7fa8ee">0</text>
<path d="M1875 522.500H1880M1875 557.500H1880M1875 590.500H1879" stroke="#555"/>
<text x="1882" y="526">1</text><text x="1882" y="561">0,5</text>

<!-- price chart -->
<rect x="1693" y="600.500" width="181" height="314.500" fill="url(#ch3)" stroke="#7d95a3"/>
<g clip-path="url(#c3)">
<path stroke="#b7c5dc" fill="none" d="M1694 621.500H1874M1694 645.500H1874M1694 669.500H1874M1694 693.500H1874M1694 718.500H1874M1694 742.500H1874M1694 766.500H1874M1694 790.500H1874M1694 814.500H1874M1694 838.500H1874M1694 862.500H1874M1694 887.500H1874M1711.500 601V915M1742.500 601V915M1772.500 601V915M1803.500 601V915M1840.500 601V915"/>
<path stroke="#9fb0ca" d="M1764.500 601V915"/>
<path stroke="#12309c" d="M1693 629.500H1874"/>
<g transform="translate(1690,510) scale(.33333)">
<rect x="12" y="272" width="512" height="52" rx="10" fill="#f8dfb2" stroke="#edc788" stroke-width="2"/>
<path d="M60 272V324M100 272V324M190 272V324M205 272V324M215 272V324M225 272V324M270 272V324M365 272V324M440 272V324" stroke="#efcf98" stroke-width="2"/>
<path d="M12 605C40 590 60 585 75 560L95 590L125 540L160 495M215 400L235 430L250 445L285 480M300 430L340 395L380 410L450 355" fill="none" stroke="#50c850" stroke-width="3" stroke-dasharray="7 6"/>
<path d="M20 580L40 600M100 570L118 590M205 380L225 410L250 440M280 440L290 470M340 390L370 420" fill="none" stroke="#e07070" stroke-width="4" stroke-dasharray="8 5"/>
<path d="M12 503H26V521H12ZM34 544H74V562H34ZM85 511H123V529H85ZM122 514H142V532H122ZM133 424H171V444H133ZM130 444H166V462H130ZM127 457H163V475H127ZM124 472H160V490H124ZM148 382H184V400H148ZM160 378H198V396H160ZM155 395H185V409H155ZM178 335H216V353H178ZM196 352H232V370H196ZM292 355H328V373H292ZM290 370H326V387H290ZM287 384H323V400H287ZM284 398H320V416H284ZM280 408H306V426H280ZM309 344H347V362H309ZM360 344H398V362H360ZM370 362H396V380H370ZM382 320H420V332H382ZM427 325H464V343H427Z" fill="#f5a522" stroke="#b87508" stroke-width="2"/>
<rect x="136" y="565" width="12" height="15" fill="#18b018" stroke="#0a800a" stroke-width="2"/>
<path d="M158 488l7-7 7 7 7-7 7 7-7 7 7 7-7 7-7-7-7 7-7-7 7-7z" fill="#20b820" stroke="#0a800a" stroke-width="2"/>
<use href="#xc" x="38" y="571"/><use href="#xc" x="92" y="555"/><use href="#xc" x="132" y="540"/><use href="#xc" x="250" y="401"/><use href="#xc" x="272" y="415"/><use href="#xc" x="341" y="376"/><use href="#xc" x="361" y="375"/><use href="#xc" x="430" y="379"/>
<use href="#ua" x="28" y="598"/><use href="#ua" x="50" y="615"/><use href="#ua" x="73" y="592"/><use href="#ua" x="97" y="578"/><use href="#ua" x="122" y="578"/><use href="#ua" x="124" y="558"/><use href="#ua" x="147" y="497"/><use href="#ua" x="175" y="442"/><use href="#ua" x="189" y="400"/><use href="#ua" x="214" y="415"/><use href="#ua" x="238" y="440"/><use href="#ua" x="260" y="458"/><use href="#ua" x="283" y="475"/><use href="#ua" x="300" y="458"/><use href="#ua" x="307" y="432"/><use href="#ua" x="327" y="405"/><use href="#ua" x="349" y="410"/><use href="#ua" x="372" y="420"/><use href="#ua" x="380" y="408"/><use href="#ua" x="395" y="382"/><use href="#ua" x="421" y="412"/><use href="#ua" x="441" y="392"/>
</g>
<text class="t13" x="1696" y="614" textLength="14" style="fill:#333">464</text>
<text class="t13" x="1725" y="614" textLength="25" style="fill:#333">5 0 5</text>
<text class="t13" x="1781" y="614" textLength="28" style="fill:#333">17341</text>
<text class="t13" x="1822" y="614" style="fill:#333">8</text>
<text class="t13" x="1840" y="614" textLength="21" style="fill:#333">2 0 1</text>
<rect x="1693" y="898.500" width="171" height="16.500" rx="3" fill="#c2d8fa" stroke="#8bb0ec"/>
<path d="M1709.500 899V915M1719.500 899V915M1738.500 899V915M1752.500 899V915M1762.500 899V915M1772.500 899V915M1795.500 899V915M1815.500 899V915M1830.500 899V915M1846.500 899V915" stroke="#8bb0ec"/>
<text class="t13" x="1695" y="911" textLength="11">63</text><text class="t13" x="1722" y="911" textLength="14">51</text><text class="t13" x="1741" y="911" textLength="11">23</text><text class="t13" x="1775" y="911" textLength="44">40 7 29 1</text><text class="t13" x="1831" y="911" textLength="12">62</text><text class="t13" x="1852" y="911" textLength="10">94</text>
</g>
<path d="M1875 621.500H1880M1875 645.500H1880M1875 669.500H1880M1875 693.500H1880M1875 718.500H1880M1875 742.500H1880M1875 766.500H1880M1875 790.500H1880M1875 814.500H1880M1875 838.500H1880M1875 862.500H1880M1875 887.500H1880M1875 909.500H1880" stroke="#555"/>
<text class="b t13" x="1882" y="626">1,15</text><text x="1882" y="650">1,14</text><text x="1882" y="674">1,13</text><text x="1882" y="698">1,12</text><text x="1882" y="722">1,11</text><text class="b t13" x="1882" y="747">1,1</text><text x="1882" y="771">1,09</text><text x="1882" y="795">1,08</text><text x="1882" y="819">1,07</text><text x="1882" y="843">1,06</text><text class="b t13" x="1882" y="867">1,05</text><text x="1882" y="892">1,04</text><text x="1882" y="914">1,03</text>
<path d="M1711.500 915V920M1742.500 915V920M1764.500 915V920M1803.500 915V920M1840.500 915V920" stroke="#555"/>
<text x="1705" y="932">22</text><text x="1736" y="932">28</text><text class="b" x="1755" y="932" textLength="19">juil.</text><text x="1797" y="932">10</text><text x="1834" y="932">16</text>

<!-- bottom toolbar -->
<rect x="1693" y="937" width="226" height="34" fill="url(#tb)"/>
<path d="M1693 936.500H1919" stroke="#7f98a4"/>
<rect x="1693" y="947.500" width="94" height="14" rx="2" fill="#a9c3cf" stroke="#8199a6"/>
<rect x="1788.500" y="947.500" width="14" height="14" rx="3" fill="#d6e4ea" stroke="#8199a6"/><path d="M1794 951L1798 954.500L1794 958Z" fill="#111"/>
<rect x="1815" y="947" width="9" height="16" fill="#3ab43a" stroke="#1a801a"/><rect x="1811" y="953" width="7" height="10" fill="#9a8a8a" stroke="#555"/>
<path d="M1822 945V965M1813 948V965" stroke="#555"/>
<path d="M1812 962L1819 954M1817 954A4 4 0 0 1 1823 949" stroke="#fff" stroke-width="3" fill="none"/>
<rect x="1833" y="941" width="25" height="26" fill="#8da8b6"/>
<circle cx="1844" cy="953" r="6.500" fill="#d8dde0" stroke="#555" stroke-width="1.200"/><path d="M1848 958L1854 965" stroke="#222" stroke-width="2.500"/>
<path d="M1852 947V957M1850 949L1852 946L1854 949M1850 955L1852 958L1854 955M1836 963H1846M1838 961L1835.500 963L1838 965M1844 961L1846.500 963L1844 965" stroke="#1a30d8" stroke-width="1.200" fill="none"/>
<circle cx="1871" cy="953" r="5.500" fill="#fff" stroke="#222" stroke-width="1.500"/><path d="M1875 957.500L1882 964" stroke="#222" stroke-width="2.500"/><path d="M1868 953H1874" stroke="#2030d8" stroke-width="1.800"/>
<circle cx="1899" cy="953" r="5.500" fill="#fff" stroke="#222" stroke-width="1.500"/><path d="M1903 957.500L1910 964" stroke="#222" stroke-width="2.500"/><path d="M1896 953H1902M1899 950V956" stroke="#2030d8" stroke-width="1.800"/>

<!-- POPUP -->
<rect x="780" y="487" width="913.500" height="483.500" fill="#9dbac8"/>
<rect x="780" y="487" width="913.500" height="24" fill="url(#tb)"/>
<path d="M780 486.500H1693M782 511.500H1690" stroke="#7d95a3"/><path d="M1693.500 487V971" stroke="#7d95a3"/>
<use href="#logo" x="779" y="487"/>
<text x="800" y="502" textLength="330">ProBacktest &amp; Trading Automatique - Création de système de trading</text>
<text x="1136" y="502">-</text>
<rect x="1145.500" y="489.500" width="164" height="20" rx="2" fill="#fff" stroke="#a4bac5"/>
<text x="1147" y="502" textLength="75">Dax m1 juanj v1</text>
<path d="M1315.500 491H1326L1330 496V508H1315.500Z" fill="#d4e0e6" stroke="#8199a6"/><circle cx="1327" cy="503" r="5" fill="#e8eff2" stroke="#778"/><text class="t11" x="1324.300" y="507" style="fill:#666">?</text><path d="M1318 497H1324M1318 500H1322M1318 503H1322" stroke="#778"/>
<path d="M1648 503.500H1657" stroke="#7f98a4" stroke-width="2"/><rect x="1663.500" y="495.500" width="8" height="8" fill="none" stroke="#7f98a4" stroke-width="1.500"/><path d="M1678.500 495L1686.500 503M1686.500 495L1678.500 503" stroke="#7f98a4" stroke-width="2"/>

<!-- code panel -->
<rect x="791" y="525" width="108" height="18" rx="3" fill="#e8eef0" stroke="#b6c8d0"/>
<text x="800" y="537" textLength="88" style="fill:#9aa4a8">Création simplifiée</text>
<rect x="900" y="522" width="155.500" height="21" rx="3" fill="url(#bl)"/>
<text x="912" y="536" textLength="133" style="fill:#fff">Création par programmation</text>
<rect x="791.500" y="542.500" width="578" height="416.500" fill="#cbdae2" stroke="#7d95a3"/>
<rect x="796.500" y="548.500" width="18" height="18.500" rx="3" fill="url(#wb)" stroke="#6e838e"/>
<path d="M800 563L806 556C804 552 807 551 810 551L808 554L810 556L812 554C812 557 811 559 808 558L802 564Z" fill="#fff" stroke="#222"/>
<text class="b" x="820" y="562" textLength="150">Optimisation des variables:</text>
<text x="978" y="562" textLength="33" style="fill:#1a30d8;text-decoration:underline">ajouter</text>
<rect x="796.500" y="572.500" width="568" height="31" fill="url(#tbar)" stroke="#8aa2ae"/>

<g transform="translate(796,570) scale(.33333)">
<circle cx="30" cy="70" r="7" fill="none" stroke="#333" stroke-width="4"/><circle cx="53" cy="70" r="7" fill="none" stroke="#333" stroke-width="4"/>
<path d="M33 63L50 32M50 63L33 32" stroke="#888" stroke-width="5"/>
<rect x="100" y="30" width="28" height="36" fill="#f4f6f7" stroke="#a8b4ba" stroke-width="3"/><rect x="115" y="45" width="30" height="36" fill="#f4f6f7" stroke="#a8b4ba" stroke-width="3"/>
<rect x="184" y="33" width="36" height="42" rx="3" fill="#a5591a"/><rect x="190" y="28" width="14" height="9" fill="#d8c090" stroke="#777"/><path d="M198 46H216L224 54V74H198Z" fill="#f4f6f7" stroke="#999" stroke-width="2"/>
<path d="M268 30V76M478 30V76M688 30V76M898 30V76" stroke="#7b8f9b" stroke-width="3"/>
<path d="M352 74C360 52 345 44 328 47V34L310 52L328 68V58C340 54 347 62 352 74Z" fill="#7fb0e8"/>
<path d="M395 74C387 52 402 44 419 47V34L437 52L419 68V58C407 54 400 62 395 74Z" fill="#9cc2ec"/>
<circle cx="537" cy="46" r="19" fill="none" stroke="#111" stroke-width="4"/><path d="M551 60L570 79" stroke="#111" stroke-width="6"/>
<path d="M612 25H638C648 25 654 32 654 42V52C654 62 648 68 638 68H630L620 84L618 68H612C602 68 596 60 596 52V42C596 32 602 25 612 25Z" fill="#f4f6f7" stroke="#b4bec4" stroke-width="3"/>
<path d="M616 58L624 36M626 58L634 36" stroke="#9a9a9a" stroke-width="3"/>
<text x="720" y="78" style="font-family:'Liberation Serif',serif;font-size:58px;fill:#222">A</text><rect x="754" y="32" width="32" height="10" fill="#fff" stroke="#777" stroke-width="2"/>
<text x="802" y="78" style="font-family:'Liberation Serif',serif;font-size:58px;fill:#222">A</text><path d="M843 24H857V31H866V44H857V52H843V44H835V31H843Z" fill="#fff" stroke="#777" stroke-width="2"/>
<circle cx="962" cy="50" r="20" fill="#ffe96e" stroke="#e8cf3a" stroke-width="3"/><path d="M953 68H972V82H953Z" fill="#c6ced2" stroke="#999" stroke-width="2"/><path d="M956 48L962 66L968 48" fill="none" stroke="#d8b818" stroke-width="2"/>
<text x="1020" y="76" style="font-family:'Liberation Serif',serif;font-style:italic;font-weight:bold;font-size:58px;fill:#111">f</text><text x="1046" y="78" style="font-family:'Liberation Serif',serif;font-weight:bold;font-size:28px;fill:#111">x</text>
<circle cx="1125" cy="54" r="29" fill="#f4f6f7" stroke="#a8b4ba" stroke-width="2"/><circle cx="1125" cy="54" r="22" fill="#2f6fd0"/><text x="1114" y="68" style="font-weight:bold;font-size:38px;fill:#fff">?</text>
<rect x="1196" y="32" width="28" height="22" fill="#f4f6f7" stroke="#555" stroke-width="2"/><path d="M1202 40H1218M1202 46H1218" stroke="#888" stroke-width="2"/>
<rect x="1180" y="50" width="55" height="26" rx="6" fill="#aeb8bd" stroke="#666" stroke-width="2"/><path d="M1182 60H1233M1182 68H1233" stroke="#666" stroke-width="2"/>
</g>

<rect x="796.500" y="603.500" width="568" height="350" fill="#fff" stroke="#7d95a3"/>
<rect x="797" y="604" width="49.500" height="349" fill="#e9edf0"/><path d="M846.500 604V953" stroke="#a8b8c0"/>
<g clip-path="url(#ed)">
<g text-anchor="end">
<text class="m" x="841" y="617">1</text><text class="m" x="841" y="634">2</text><text class="m" x="841" y="651">3</text><text class="m" x="841" y="668">4</text><text class="m" x="841" y="685">5</text><text class="m" x="841" y="702">6</text><text class="m" x="841" y="719">7</text><text class="m" x="841" y="736">8</text><text class="m" x="841" y="753">9</text><text class="m" x="841" y="770">10</text><text class="m" x="841" y="787">11</text><text class="m" x="841" y="821">12</text><text class="m" x="841" y="838">13</text><text class="m" x="841" y="872">14</text><text class="m" x="841" y="889">15</text><text class="m" x="841" y="906">16</text><text class="m" x="841" y="923">17</text><text class="m" x="841" y="940">18</text><text class="m" x="841" y="957">19</text>
</g>
<text class="m" x="847" y="617"><tspan class="mb">DEFPARAM CumulateOrders</tspan> = <tspan class="mm">False</tspan> <tspan class="mc">// Cumul des positions désactivé</tspan></text>
<text class="m" x="847" y="651">noEntryBeforeTime = <tspan class="mm">090000</tspan></text>
<text class="m" x="847" y="668">timeEnterBefore = <tspan class="mb">time &gt;=</tspan> noEntryBeforeTime</text>
<text class="m" x="847" y="702">noEntryAfterTime = <tspan class="mm">173000</tspan></text>
<text class="m" x="847" y="719">timeEnterAfter = <tspan class="mb">time &lt;</tspan> noEntryAfterTime</text>
<text class="m" x="847" y="753">daysForbiddenEntry = <tspan class="mb">OpenDayOfWeek</tspan> = <tspan class="mm">6</tspan> <tspan class="mb">OR OpenDayOfWeek</tspan> = <tspan class="mm">0</tspan></text>
<text class="m" x="847" y="787"><tspan class="mb">If longonmarket and close &lt; positionprice and (barindex-tradeindex) &gt;</tspan></text>
<text class="m" x="847" y="804"><tspan class="mm">650</tspan> <tspan class="mb">Then</tspan></text>
<text class="m" x="847" y="821"><tspan class="mb">   Sell at market</tspan></text>
<text class="m" x="847" y="838"><tspan class="mb">ElsIf shortonmarket and close &gt; positionprice and (barindex-tradeindex)</tspan></text>
<text class="m" x="847" y="855"><tspan class="mb"> &gt; </tspan><tspan class="mm">60</tspan> <tspan class="mb">then</tspan></text>
<text class="m" x="847" y="872"><tspan class="mb">   Exitshort at market</tspan></text>
<text class="m" x="847" y="889"><tspan class="mb">EndIf</tspan></text>
<text class="m" x="847" y="923">body=<tspan class="mb">close-open</tspan></text>
<text class="m" x="847" y="957">abody=<tspan class="mb">abs</tspan>(body)</text>
</g>
<rect x="1347.500" y="604" width="16.500" height="349" fill="#9dbac8"/>
<rect x="1348.500" y="605.500" width="14" height="13" rx="3" fill="url(#scr)" stroke="#7d95a3"/><path d="M1355.500 610L1359 614H1352Z" fill="#111"/>
<rect x="1348.500" y="621.500" width="14" height="16" rx="3" fill="url(#scr)" stroke="#7d95a3"/><path d="M1352 627H1359M1352 629.500H1359M1352 632H1359" stroke="#6d8794"/>
<rect x="1348.500" y="938.500" width="14" height="13.500" rx="3" fill="url(#scr)" stroke="#7d95a3"/><path d="M1355.500 947L1359 943H1352Z" fill="#111"/>

<!-- right panel -->
<rect x="1380.500" y="600" width="301.500" height="359" fill="#cbdae2" stroke="#7d95a3"/>
<path d="M1531 600.500V523H1676Q1682 523 1682 529V600.500Z" fill="url(#pt2)" stroke="#7d95a3"/>
<path d="M1380.500 601V528Q1380.500 522.500 1386 522.500H1531V601" fill="url(#pt)" stroke="#7d95a3"/>
<rect x="1381" y="598" width="149.500" height="5" fill="#cbdae2"/>
<path d="M1531 600.500H1682" stroke="#7d95a3"/>
<text x="1427" y="538" textLength="58">ProBacktest</text>
<text x="1554" y="540" textLength="106">ProOrder AutoTrading</text>
<g transform="translate(1385,525) scale(.33333)">
<rect x="56" y="71" width="111" height="122" rx="3" fill="#fff" stroke="#1a56c4" stroke-width="3"/><rect x="56" y="71" width="111" height="15" fill="#2a70d0"/>
<path d="M95 75V190M130 75V190" stroke="#2a70d0" stroke-width="2"/>
<path d="M75 92V188M112 92V188M149 92V188" stroke="#8a8a8a" stroke-width="30" stroke-dasharray="2 4"/>
<polygon points="167,155 180,158 195,150 210,130 222,125 235,110 245,128 258,115 280,115 298,92 315,122 328,105 340,118 358,85 360,185 167,185" fill="url(#grn)"/>
<polyline points="167,155 180,158 195,150 210,130 222,125 235,110 245,128 258,115 280,115 298,92 315,122 328,105 340,118 358,85" fill="none" stroke="#18a818" stroke-width="5"/>
<path d="M167 185H372M361 70V190M361 95H372M361 125H372M361 155H372M180 185V195M210 185V195M240 185V195M270 185V195M300 185V195M330 185V195" stroke="#9aa6ad" stroke-width="2" fill="none"/>
<path d="M239 82H249V92H254L244 100L234 92H239ZM296 70H306V78H311L301 87L291 78H296Z" fill="#444"/>
<path d="M226 134L236 144H231V155H221V144H216ZM283 126L293 136H288V147H278V136H273Z" fill="#fff" stroke="#778" stroke-width="2"/>
<polygon points="515,155 540,160 570,155 600,153 635,168 660,140 680,120 700,135 718,115 740,120 755,100 770,125 790,122 813,90 813,190 515,190" fill="url(#grn)"/>
<polyline points="515,155 540,160 570,155 600,153 635,168 660,140 680,120 700,135 718,115 740,120 755,100 770,125 790,122 813,90" fill="none" stroke="#18a818" stroke-width="5"/>
<path d="M635 115H678" stroke="#888" stroke-width="2"/><path d="M678 115H813" stroke="#1a22d8" stroke-width="3"/>
<path d="M515 190H825M510 190V200M570 190V200M630 190V200M690 190V200M750 190V200M810 190V200" stroke="#9aa6ad" stroke-width="2"/>
<circle cx="558" cy="108" r="14" fill="#1a5cc0" stroke="#1a5cc0" stroke-width="7" stroke-dasharray="6 4"/><circle cx="558" cy="108" r="6" fill="#cfe0ef"/>
<circle cx="590" cy="90" r="10" fill="#1a5cc0" stroke="#1a5cc0" stroke-width="6" stroke-dasharray="5 4"/><circle cx="590" cy="90" r="4" fill="#cfe0ef"/>
<circle cx="590" cy="125" r="10" fill="#1a5cc0" stroke="#1a5cc0" stroke-width="6" stroke-dasharray="5 4"/><circle cx="590" cy="125" r="4" fill="#cfe0ef"/>
<path d="M540 88C520 88 512 100 522 118" fill="none" stroke="#e85050" stroke-width="6"/><path d="M508 114L524 132L538 114Z" fill="#e85050"/>
<path d="M606 128C624 128 626 115 625 100" fill="none" stroke="#18a030" stroke-width="6"/><path d="M611 102L625 84L639 102Z" fill="#18a030"/>
<path d="M694 88H702V96H706L698 104L690 96H694ZM751 76H759V84H763L755 92L747 84H751Z" fill="#e83030"/>
<path d="M680 143L688 151H684V158H676V151H672ZM737 134L745 142H741V149H733V142H729Z" fill="#12b012"/>
</g>

<text class="b" x="1459" y="622" textLength="143">EUR/USD Mini (-) - 1 minute</text>
<text x="1455" y="647" textLength="64">Capital initial :</text>
<rect x="1524.500" y="632.500" width="69" height="21" rx="3" class="fr"/>
<text x="1527" y="647" textLength="17">500</text><text x="1599" y="647">$</text>
<text class="b" x="1389" y="670" textLength="179">Estimation des frais de courtage</text>

<rect x="1393.500" y="686.500" width="11" height="11" fill="#fff" stroke="#667"/>
<text x="1409" y="695" textLength="78">Frais par ordre :</text>
<rect x="1496.500" y="680.500" width="53" height="21.500" rx="3" class="dis"/><text x="1500" y="695" style="fill:#8f9fa8">0</text>
<rect x="1555.500" y="680.500" width="110" height="21.500" rx="3" class="dis"/><text x="1559" y="695" textLength="41" style="fill:#8f9fa8">$ / ordre</text>
<rect x="1653" y="682" width="12" height="18" class="dis"/><path d="M1656 689H1662L1659 693Z" fill="none" stroke="#889ba5"/>
<rect x="1448.500" y="711.500" width="11" height="11" fill="#cbdae2" stroke="#8199a6"/>
<text x="1463" y="720" textLength="18" style="fill:#8f9fa8">Min:</text>
<rect x="1496.500" y="705.500" width="53" height="21.500" rx="3" class="dis"/><text x="1500" y="720" style="fill:#8f9fa8">0</text>
<rect x="1555.500" y="705.500" width="110" height="21.500" rx="3" class="dis"/><text x="1559" y="720" textLength="41" style="fill:#8f9fa8">$ / ordre</text>
<rect x="1653" y="707" width="12" height="18" class="dis"/><path d="M1656 714H1662L1659 718Z" fill="none" stroke="#889ba5"/>
<rect x="1448.500" y="736.500" width="11" height="11" fill="#cbdae2" stroke="#8199a6"/>
<text x="1463" y="745" textLength="22" style="fill:#8f9fa8">Max:</text>
<rect x="1496.500" y="730.500" width="53" height="21.500" rx="3" class="dis"/><text x="1500" y="745" style="fill:#8f9fa8">0</text>
<rect x="1555.500" y="730.500" width="110" height="21.500" rx="3" class="dis"/><text x="1559" y="745" textLength="41" style="fill:#8f9fa8">$ / ordre</text>
<rect x="1653" y="732" width="12" height="18" class="dis"/><path d="M1656 739H1662L1659 743Z" fill="none" stroke="#889ba5"/>

<rect x="1393.500" y="761.500" width="11" height="11" fill="#fff" stroke="#667"/><path d="M1396 766L1399 771L1405 759" fill="none" stroke="#111" stroke-width="1.800"/>
<text x="1409" y="770" textLength="41">Spread :</text>
<rect x="1496.500" y="755.500" width="53" height="21.500" rx="3" class="fr"/><text x="1526" y="770">1</text>
<rect x="1533" y="757" width="14" height="9" rx="2" fill="url(#btn)"/><rect x="1533" y="767" width="14" height="9" rx="2" fill="url(#btn)"/><path d="M1540 759L1543 763H1537ZM1540 774L1543 770H1537Z" fill="#111"/>
<text x="1555" y="770" textLength="20">pips</text>
<text class="b" x="1389" y="793" textLength="133">Période de la simulation</text>
<text x="1389" y="812" textLength="73">Date de début :</text>
<circle cx="1477" cy="809" r="6.500" fill="#fff" stroke="#8199a6"/><circle cx="1477" cy="809" r="2.500" fill="#111"/>
<text x="1488" y="813" textLength="109">Première date affichée</text>
<circle cx="1477" cy="834" r="6.500" fill="#fff" stroke="#8199a6"/>
<text x="1488" y="838" textLength="102">16 juil. 2017 14:41:56</text><use href="#cal" x="1598" y="825"/>
<text x="1389" y="867" textLength="58">Date de fin :</text>
<circle cx="1477" cy="864" r="6.500" fill="#fff" stroke="#8199a6"/><circle cx="1477" cy="864" r="2.500" fill="#111"/>
<text x="1488" y="868" textLength="126">Dernière date (temps réel)</text>
<circle cx="1477" cy="889" r="6.500" fill="#fff" stroke="#8199a6"/>
<text x="1488" y="893" textLength="102">16 juil. 2017 14:41:56</text><use href="#cal" x="1598" y="880"/>
<path d="M1381 914.500H1665" stroke="#7d95a3"/>
<rect x="1393.500" y="932.500" width="11" height="11" fill="#fff" stroke="#667"/><path d="M1396 937L1399 942L1405 930" fill="none" stroke="#111" stroke-width="1.800"/>
<text x="1409" y="941" textLength="159">ProBacktest en mode tick par tick</text>
<path d="M1574 929.500H1582Q1584.500 929.500 1584.500 932V936Q1584.500 938 1582 938.500L1584 941L1578 938.500H1574Q1572 938 1572 936V932Q1572 929.500 1574 929.500Z" fill="#3aa2e8"/>

<rect x="1665.500" y="602" width="15" height="356" fill="#9dbac8"/>
<rect x="1665.500" y="602.500" width="15" height="15.500" rx="3" fill="url(#scr)" stroke="#7d95a3"/><path d="M1673 607L1676.500 611H1669.500Z" fill="#111"/>
<rect x="1665.500" y="619.500" width="15" height="278" rx="3" fill="url(#scr)" stroke="#7d95a3"/><path d="M1669 755H1677M1669 757.500H1677M1669 760H1677" stroke="#6d8794"/>
<rect x="1665.500" y="942.500" width="15" height="15.500" rx="3" fill="url(#scr)" stroke="#7d95a3"/><path d="M1673 953L1676.500 949H1669.500Z" fill="#111"/>

<rect x="0" y="970.500" width="1919" height="2.500" fill="#0a0a0a"/>
</svg>
</body></html>
